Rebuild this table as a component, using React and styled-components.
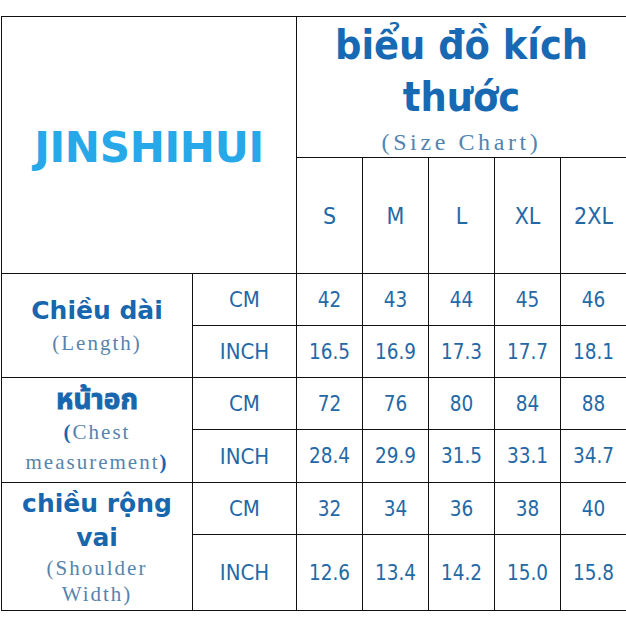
import React from 'react'
import styled, { createGlobalStyle } from 'styled-components'

const GlobalStyle = createGlobalStyle`
  html, body {
    margin: 0;
    padding: 0;
    background: #ffffff;
    overflow: hidden;
  }
`

const sizes = ['S', 'M', 'L', 'XL', '2XL']

const measures = [
  {
    key: 'length',
    title: ['Chiều dài'],
    sub: ['(Length)'],
    cm: ['42', '43', '44', '45', '46'],
    inch: ['16.5', '16.9', '17.3', '17.7', '18.1'],
    heights: [52, 52],
  },
  {
    key: 'chest',
    title: ['หน้าอก'],
    thai: true,
    sub: ['(Chest', 'measurement)'],
    boldParens: true,
    cm: ['72', '76', '80', '84', '88'],
    inch: ['28.4', '29.9', '31.5', '33.1', '34.7'],
    heights: [52, 53],
  },
  {
    key: 'shoulder',
    title: ['chiều rộng', 'vai'],
    sub: ['(Shoulder', 'Width)'],
    cm: ['32', '34', '36', '38', '40'],
    inch: ['12.6', '13.4', '14.2', '15.0', '15.8'],
    heights: [52, 76],
  },
]

const Page = styled.div`
  width: 626px;
  height: 626px;
  padding-top: 16px;
  padding-left: 1px;
  box-sizing: border-box;
  background: #ffffff;
`

const Chart = styled.table`
  border-collapse: collapse;
  table-layout: fixed;
  width: 625px;

  td {
    border: 1.5px solid #111111;
    padding: 0;
    text-align: center;
    vertical-align: middle;
  }
`

const Row = styled.tr`
  height: ${props => props.$h}px;
`

const LogoCell = styled.td``

const Logo = styled.div`
  font-family: 'DejaVu Sans', 'Liberation Sans', sans-serif;
  font-weight: 700;
  font-size: 42px;
  letter-spacing: -0.3px;
  color: #27a8e9;
  line-height: 1;
  padding-top: 6px;
`

const TitleCell = styled.td`
  padding-top: 0 !important;
`

const Title = styled.div`
  font-family: 'DejaVu Sans Condensed', 'DejaVu Sans', sans-serif;
  font-stretch: condensed;
  font-weight: 700;
  font-size: 41px;
  line-height: 52px;
  color: #1869b3;
  padding: 0 18px;
`

const SubTitle = styled.div`
  font-family: 'Liberation Serif', 'DejaVu Serif', serif;
  font-size: 24px;
  letter-spacing: 3.6px;
  line-height: 26px;
  color: #5284b0;
  margin-top: 6px;
`

const SizeCell = styled.td`
  font-family: 'DejaVu Sans Condensed', 'DejaVu Sans', sans-serif;
  font-stretch: condensed;
  font-size: 23px;
  color: #2468a6;
`

const LabelCell = styled.td``

const LabelStack = styled.div`
  display: flex;
  flex-direction: column;
  align-items: center;
`

const LabelTitle = styled.div`
  font-family: 'DejaVu Sans', 'Noto Sans', 'Noto Sans Thai', sans-serif;
  font-weight: 700;
  font-size: ${props => (props.$thai ? 28 : 25)}px;
  -webkit-text-stroke: ${props => (props.$thai ? '0.9px #1766ae' : '0')};
  line-height: 34px;
  color: #1766ae;
  white-space: nowrap;
`

const LabelSub = styled.div`
  font-family: 'Liberation Serif', 'DejaVu Serif', serif;
  font-size: 21px;
  letter-spacing: 2px;
  line-height: ${props => (props.$tight ? 26 : 30)}px;
  color: #5584ad;
  white-space: nowrap;
`

const Paren = styled.span`
  font-weight: 700;
  color: #1766ae;
`

const UnitCell = styled.td`
  font-family: 'DejaVu Sans Condensed', 'DejaVu Sans', sans-serif;
  font-stretch: condensed;
  font-size: 22px;
  color: #2468a6;
`

const ValueCell = styled.td`
  font-family: 'DejaVu Sans Condensed', 'DejaVu Sans', sans-serif;
  font-stretch: condensed;
  font-size: 20.5px;
  color: #2468a6;
`

function SubLine({ text, bold, tight }) {
  if (!bold) return <LabelSub $tight={tight}>{text}</LabelSub>
  const open = text.startsWith('(')
  const close = text.endsWith(')')
  const core = text.replace(/^\(/, '').replace(/\)$/, '')
  return (
    <LabelSub $tight={tight}>
      {open && <Paren>(</Paren>}
      {core}
      {close && <Paren>)</Paren>}
    </LabelSub>
  )
}

export default function App() {
  return (
    <>
      <GlobalStyle />
      <Page>
        <Chart>
          <colgroup>
            <col style={{ width: 191 }} />
            <col style={{ width: 104 }} />
            {sizes.map(s => <col key={s} style={{ width: 66 }} />)}
          </colgroup>
          <tbody>
            <Row $h={141}>
              <LogoCell colSpan={2} rowSpan={2}>
                <Logo>JINSHIHUI</Logo>
              </LogoCell>
              <TitleCell colSpan={5}>
                <Title>biểu đồ kích thước</Title>
                <SubTitle>(Size Chart)</SubTitle>
              </TitleCell>
            </Row>
            <Row $h={116}>
              {sizes.map(s => <SizeCell key={s}>{s}</SizeCell>)}
            </Row>
            {measures.map(m => (
              <React.Fragment key={m.key}>
                <Row $h={m.heights[0]}>
                  <LabelCell rowSpan={2}>
                    <LabelStack>
                      {m.title.map(t => <LabelTitle key={t} $thai={m.thai}>{t}</LabelTitle>)}
                      {m.sub.map(t => (
                        <SubLine key={t} text={t} bold={m.boldParens} tight={m.title.length > 1} />
                      ))}
                    </LabelStack>
                  </LabelCell>
                  <UnitCell>CM</UnitCell>
                  {m.cm.map((v, i) => <ValueCell key={i}>{v}</ValueCell>)}
                </Row>
                <Row $h={m.heights[1]}>
                  <UnitCell>INCH</UnitCell>
                  {m.inch.map((v, i) => <ValueCell key={i}>{v}</ValueCell>)}
                </Row>
              </React.Fragment>
            ))}
          </tbody>
        </Chart>
      </Page>
    </>
  )
}
